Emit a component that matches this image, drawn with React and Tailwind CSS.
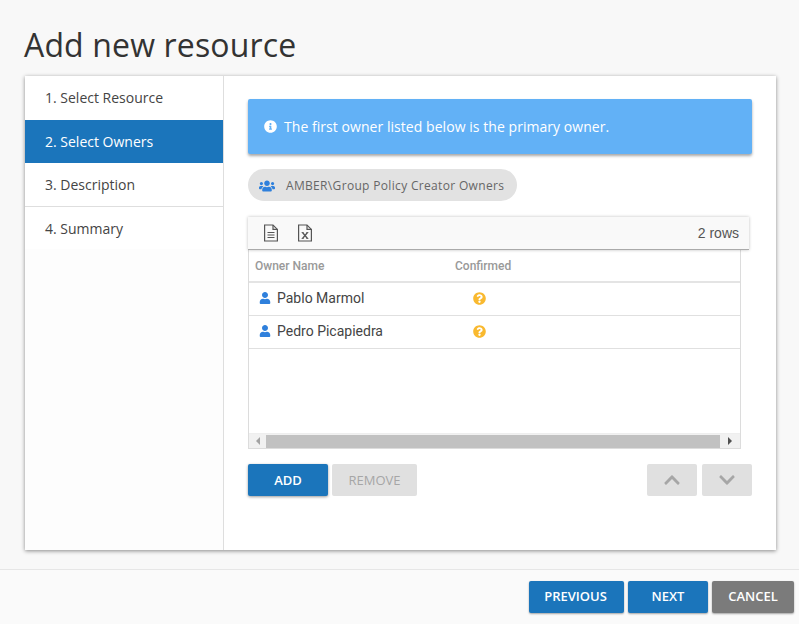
import { FaInfoCircle, FaUsers, FaUser, FaQuestionCircle, FaChevronUp, FaChevronDown } from "react-icons/fa";

const steps = ["1. Select Resource", "2. Select Owners", "3. Description", "4. Summary"];
const owners = ["Pablo Marmol", "Pedro Picapiedra"];

const PageIcon = ({ children }) => (
  <svg width="16" height="18" viewBox="0 0 16 18" fill="none" stroke="#555" strokeWidth="1.2">
    <path d="M1.6 1h8.4l4.4 4.4V17H1.6z" />
    <path d="M10 1v4.4h4.4" />
    {children}
  </svg>
);

const App = () => {
  return (
    <div className="w-[799px] h-[624px] overflow-hidden bg-[#f8f8f8] flex flex-col font-['Open_Sans',sans-serif]">

      <h1 className="ml-6 mt-[22px] h-[54px] text-[32px] leading-[46px] text-[#333] tracking-[0.15px]">
        Add new resource
      </h1>

      {/* CARD */}
      <div className="ml-[25px] w-[751px] h-[474px] bg-white flex shadow-[0_1px_4px_rgba(0,0,0,0.45)]">

        {/* STEPS */}
        <div className="w-[199px] shrink-0 border-r border-[#dedede] bg-[#fdfdfd]">
          <div className="bg-white">
            {steps.map((s, i) => (
              <div
                key={s}
                className={`pl-5 text-[14px] flex items-center ${
                  i === 1
                    ? "h-[43px] bg-[#1b75bb] text-white"
                    : i === 0
                    ? "h-[44px] pb-[2px] text-[#444]"
                    : i === 2
                    ? "h-[44px] text-[#444] border-b border-[#dedede]"
                    : "h-[42px] text-[#444]"
                }`}
              >
                {s}
              </div>
            ))}
          </div>
        </div>

        {/* MAIN */}
        <div className="flex-1 pl-6 pr-6 pt-[23px]">

          <div className="h-[55px] rounded-[2px] bg-[#62b1f6] text-white flex items-center pl-4 gap-[7px] text-[14px] tracking-[0.05px] shadow-[0_2px_3px_rgba(0,0,0,0.35)]">
            <FaInfoCircle className="text-[13px]" />
            The first owner listed below is the primary owner.
          </div>

          <div className="mt-[15px] h-8 w-[269px] pt-px rounded-full bg-[#e2e2e2] flex items-center pl-[11px] gap-[11px] text-[12px] tracking-[0.33px] text-[#666]">
            <FaUsers className="text-[16px] text-[#2f80dc]" />
            AMBER\Group Policy Creator Owners
          </div>

          {/* GRID */}
          <div className="mt-4 w-[501px] h-[33px] bg-[#f9f9f9] border-b border-[#aaa] flex items-center justify-between pl-[15px] pr-[10px] shadow-[0_0_3px_rgba(0,0,0,0.25)] relative">
            <div className="flex items-center gap-[18px]">
              <PageIcon>
                <path d="M4.5 8.5h7M4.5 11h7M4.5 13.5h7" />
              </PageIcon>
              <PageIcon>
                <path d="M5.5 8.5l5 6M10.5 8.5l-5 6" strokeWidth="1.3" />
                <path d="M4.6 8.5h2M9.4 8.5h2M4.6 14.5h2M9.4 14.5h2" strokeWidth="0.8" />
              </PageIcon>
            </div>
            <span className="text-[14px] text-[#555] font-['Liberation_Sans',sans-serif]">2 rows</span>
          </div>

          <div className="w-[493px] h-[199px] border-x border-b border-[#dcdcdc] bg-white flex flex-col font-['Roboto',sans-serif]">
            <div className="h-[33px] shrink-0 border-b-2 border-[#e4e4e4] flex items-center text-[12px] font-medium text-[#999]">
              <span className="w-[206px] pl-[6px]">Owner Name</span>
              <span>Confirmed</span>
            </div>
            {owners.map((o) => (
              <div key={o} className="h-[33px] pb-[2px] shrink-0 border-b border-[#e0e0e0] flex items-center text-[14px] text-[#444]">
                <div className="w-[224px] flex items-center pl-[10px] gap-[6px]">
                  <FaUser className="text-[12px] text-[#2f80dc]" />
                  {o}
                </div>
                <FaQuestionCircle className="text-[13px] text-[#f9b92f]" />
              </div>
            ))}
            <div className="flex-1" />
            {/* SCROLLBAR */}
            <div className="h-[15px] shrink-0 bg-[#f1f1f1] flex items-center border-t border-[#eee]">
              <div className="w-[17px] flex justify-center">
                <div className="border-y-[4px] border-y-transparent border-r-[4px] border-r-[#a3a3a3]" />
              </div>
              <div className="w-[454px] h-[13px] bg-[#c1c1c1]" />
              <div className="flex-1 flex justify-center">
                <div className="border-y-[4px] border-y-transparent border-l-[4px] border-l-[#505050]" />
              </div>
            </div>
          </div>

          {/* ACTIONS */}
          <div className="mt-[15px] flex items-center text-[13px] font-semibold">
            <button className="w-20 h-8 pt-px rounded-[2px] bg-[#1b75bb] text-white shadow-[0_1px_3px_rgba(0,0,0,0.4)]">ADD</button>
            <button className="ml-1 w-[85px] h-8 pt-[2px] rounded-[2px] bg-[#e0e0e0] text-[#a6a6a6] font-normal">REMOVE</button>
            <button className="ml-auto w-[50px] h-8 rounded-[2px] bg-[#e0e0e0] text-[#a6a6a6] flex items-center justify-center text-[18px]">
              <FaChevronUp />
            </button>
            <button className="ml-[5px] w-[50px] h-8 rounded-[2px] bg-[#e0e0e0] text-[#a6a6a6] flex items-center justify-center text-[18px]">
              <FaChevronDown />
            </button>
          </div>

        </div>
      </div>

      {/* FOOTER */}
      <div className="mt-[19px] flex-1 border-t border-[#e6e6e6] bg-[#fafafa] flex items-start justify-end gap-1 pt-[11px] pr-[5px] text-[13px] font-semibold text-white">
        <button className="w-[95px] h-8 pr-[2px] rounded-[2px] bg-[#1b75bb] shadow-[0_1px_2px_rgba(0,0,0,0.35)]">PREVIOUS</button>
        <button className="w-20 h-8 rounded-[2px] bg-[#1b75bb] shadow-[0_1px_2px_rgba(0,0,0,0.35)]">NEXT</button>
        <button className="w-[82px] h-8 rounded-[2px] bg-[#7b7b7b] shadow-[0_1px_2px_rgba(0,0,0,0.35)]">CANCEL</button>
      </div>

    </div>
  );
};

export default App;
